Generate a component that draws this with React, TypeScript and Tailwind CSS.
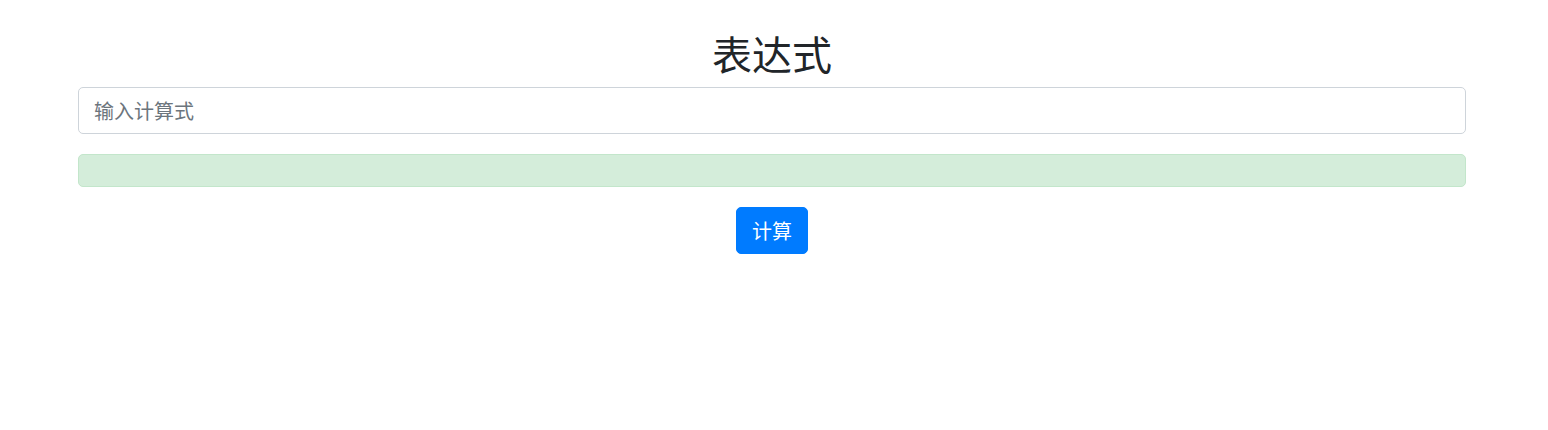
import React from "react";

export default function App() {
  return (
    <div
      className="w-[1548px] h-[430px] bg-white text-[#212529]"
      style={{ fontFamily: '"Microsoft YaHei", "Noto Sans CJK SC", "Noto Sans", sans-serif' }}
    >
      <div className="ml-[78px] w-[1388px] pt-[29px] flex flex-col">
        <h2 className="text-[40px] leading-[48px] font-normal text-center mb-[10px] text-[#212529]">表达式</h2>
        <input
          type="text"
          placeholder="输入计算式"
          className="h-[47px] w-full border border-[#ced4da] rounded-[5px] px-[15px] text-[20px] text-[#495057] placeholder:text-[#6c757d] outline-none mb-[20px]"
        />
        <div className="h-[33px] w-full bg-[#d4edda] border border-[#c3e6cb] rounded-[5px] mb-[20px]"></div>
        <div className="flex justify-center">
          <button className="h-[47px] w-[72px] bg-[#007bff] text-white text-[20px] leading-[30px] rounded-[5px] border border-[#007bff]">
            计算
          </button>
        </div>
      </div>
    </div>
  );
}
